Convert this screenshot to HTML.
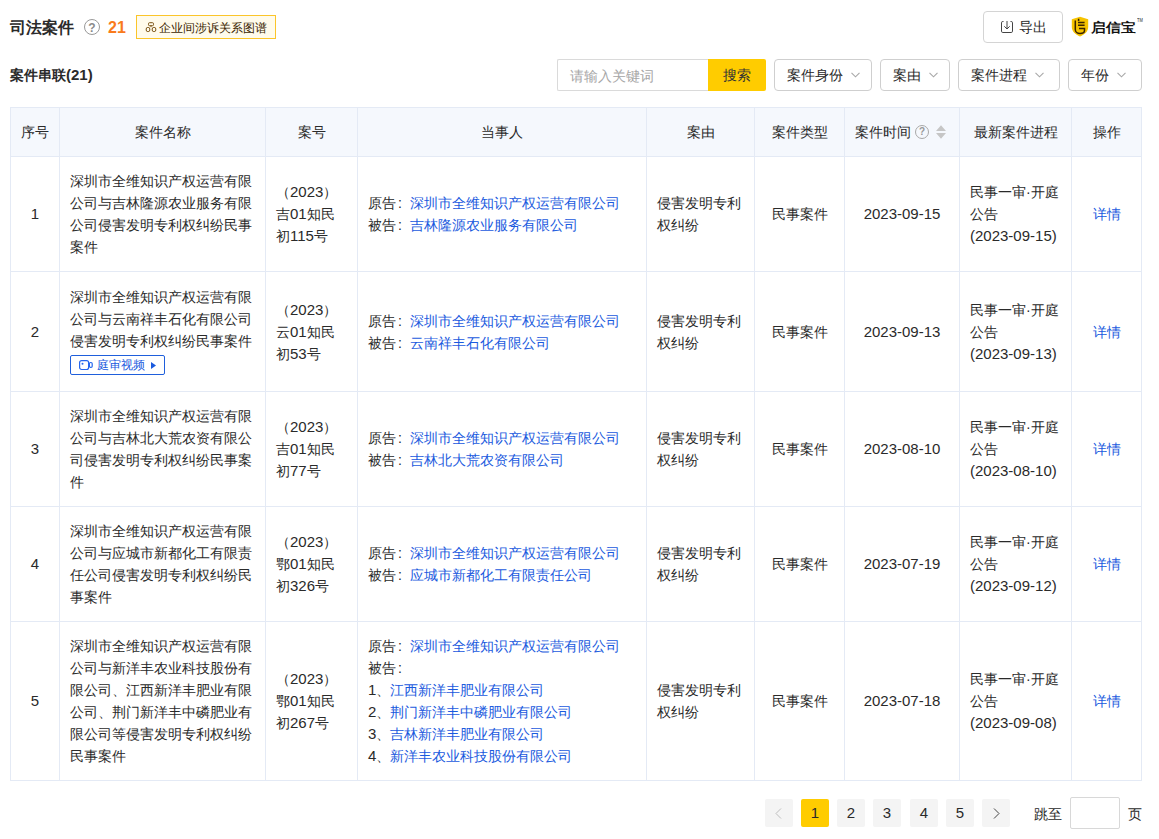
<!DOCTYPE html><html><head><meta charset="utf-8"><style>
*{margin:0;padding:0;box-sizing:border-box}
html,body{width:1159px;height:839px;overflow:hidden;background:#fff}
body{position:relative;font-family:"Liberation Sans",sans-serif;font-size:14px;color:#2a2a2a;line-height:22px}
.a{position:absolute}
.nw{white-space:nowrap}
.c{position:absolute;display:flex;align-items:center;padding:0 10px;white-space:nowrap}
.cc{justify-content:center;text-align:center}
.hl{position:absolute;height:1px;background:#e4eaf5}
.vl{position:absolute;width:1px;background:#e4eaf5}
.lk{color:#1a5ade}
.n{font-size:15px}
.co{display:inline-block;width:14px;padding-left:2px}
.dd{position:absolute;top:59px;height:32px;border:1px solid #cfcfcf;border-radius:4px;display:flex;align-items:center;padding-left:12px;white-space:nowrap}
.chev{position:absolute;top:12px;width:9px;height:6px}
.pg{position:absolute;top:799px;width:28px;height:28px;background:#f4f4f4;border-radius:2px;text-align:center;line-height:28px;font-size:14px}
</style></head><body><div class="a nw" style="left:10px;top:17px;font-size:16px;font-weight:bold;line-height:22px">司法案件</div>
<div class="a" style="left:84px;top:19px;width:16px;height:16px;border:1px solid #999;border-radius:50%;font-size:12px;font-weight:bold;line-height:16px;text-align:center;color:#8a8a8a">?</div>
<div class="a nw" style="left:108px;top:17px;font-size:16px;font-weight:bold;color:#f97a1c;line-height:22px">21</div>
<div class="a nw" style="left:136px;top:15px;width:140px;height:24px;border:1px solid #fbc52a;background:#fffbeb;font-size:12px;line-height:24px;padding-left:22px;color:#3a2500">企业间涉诉关系图谱</div>
<svg class="a" style="left:145px;top:21px" width="12" height="12" viewBox="0 0 12 12"><g fill="none" stroke="#7a5212" stroke-width="1"><rect x="3.5" y="1.7" width="5" height="3" rx="1"/><path d="M6 4.7V6.2"/><rect x="1.2" y="6.4" width="3.6" height="4.2" rx="1.6"/><rect x="7.2" y="6.4" width="3.6" height="4.2" rx="1.6"/></g></svg>
<div class="a" style="left:983px;top:11px;width:80px;height:32px;border:1px solid #d4d4d4;border-radius:4px"></div>
<svg class="a" style="left:1000px;top:20px" width="14" height="14" viewBox="0 0 14 14"><g fill="none" stroke="#444" stroke-width="1"><path d="M3.5 1.5H2.8Q1.5 1.5 1.5 2.8V11.2Q1.5 12.5 2.8 12.5H11.2Q12.5 12.5 12.5 11.2V2.8Q12.5 1.5 11.2 1.5H10.5"/><path d="M7 1V9M4.3 6.3L7 9L9.7 6.3"/></g></svg>
<div class="a nw" style="left:1019px;top:16px">导出</div>
<svg class="a" style="left:1071px;top:16px" width="18" height="21" viewBox="0 0 18 21"><path d="M9 0.8L17.2 3.2V11C17.2 15.3 13.6 18.8 9 20.4C4.4 18.8 0.8 15.3 0.8 11V3.2Z" fill="#f6c300"/><g stroke="#3b2400" stroke-width="1.5" fill="none"><path d="M4.3 4.5V13.5C4.3 16 6.5 17.5 9 17.5C11.5 17.5 13.5 16.3 13.5 14.5V12.5H8"/><path d="M7.6 2.8V5M7 6.5H13.6M7 9.3H13.6"/></g></svg>
<div class="a nw" style="left:1091px;top:16px;font-size:15px;font-weight:bold;color:#111;letter-spacing:0px;transform:scaleY(0.88);transform-origin:0 13px">启信宝</div>
<div class="a nw" style="left:1137px;top:18px;font-size:5px;line-height:5px;color:#222;transform:scaleX(0.8);transform-origin:0 0">TM</div>
<div class="a nw" style="left:10px;top:64px;font-weight:bold">案件串联<span class="n">(21)</span></div>
<div class="a" style="left:557px;top:59px;width:152px;height:32px;border:1px solid #dadada;border-right:none;border-radius:2px 0 0 2px"></div>
<div class="a nw" style="left:570px;top:65px;color:#a6a6a6">请输入关键词</div>
<div class="a" style="left:708px;top:59px;width:58px;height:32px;background:#ffcc00;border-radius:0 2px 2px 0;text-align:center;line-height:32px;color:#333">搜索</div>
<div class="dd" style="left:774px;width:98px">案件身份<svg class="chev" style="left:76px" width="9" height="6" viewBox="0 0 9 6"><path d="M0.5 0.8L4.5 4.8L8.5 0.8" fill="none" stroke="#a8a8a8" stroke-width="1.1"/></svg></div>
<div class="dd" style="left:880px;width:70px">案由<svg class="chev" style="left:48px" width="9" height="6" viewBox="0 0 9 6"><path d="M0.5 0.8L4.5 4.8L8.5 0.8" fill="none" stroke="#a8a8a8" stroke-width="1.1"/></svg></div>
<div class="dd" style="left:958px;width:102px">案件进程<svg class="chev" style="left:76px" width="9" height="6" viewBox="0 0 9 6"><path d="M0.5 0.8L4.5 4.8L8.5 0.8" fill="none" stroke="#a8a8a8" stroke-width="1.1"/></svg></div>
<div class="dd" style="left:1068px;width:74px">年份<svg class="chev" style="left:48px" width="9" height="6" viewBox="0 0 9 6"><path d="M0.5 0.8L4.5 4.8L8.5 0.8" fill="none" stroke="#a8a8a8" stroke-width="1.1"/></svg></div>
<div class="a" style="left:10px;top:107px;width:1132px;height:49px;background:#f5f8fd"></div>
<div class="hl" style="left:10px;top:107px;width:1132px"></div>
<div class="hl" style="left:10px;top:156px;width:1132px"></div>
<div class="hl" style="left:10px;top:271px;width:1132px"></div>
<div class="hl" style="left:10px;top:391px;width:1132px"></div>
<div class="hl" style="left:10px;top:506px;width:1132px"></div>
<div class="hl" style="left:10px;top:621px;width:1132px"></div>
<div class="hl" style="left:10px;top:780px;width:1132px"></div>
<div class="vl" style="left:10px;top:107px;height:674px"></div>
<div class="vl" style="left:59px;top:107px;height:674px"></div>
<div class="vl" style="left:265px;top:107px;height:674px"></div>
<div class="vl" style="left:357px;top:107px;height:674px"></div>
<div class="vl" style="left:646px;top:107px;height:674px"></div>
<div class="vl" style="left:754px;top:107px;height:674px"></div>
<div class="vl" style="left:844px;top:107px;height:674px"></div>
<div class="vl" style="left:959px;top:107px;height:674px"></div>
<div class="vl" style="left:1071px;top:107px;height:674px"></div>
<div class="vl" style="left:1141px;top:107px;height:674px"></div>
<div class="c cc" style="left:11px;top:108px;width:48px;height:48px;"><div>序号</div></div>
<div class="c cc" style="left:60px;top:108px;width:205px;height:48px;"><div>案件名称</div></div>
<div class="c cc" style="left:266px;top:108px;width:91px;height:48px;"><div>案号</div></div>
<div class="c cc" style="left:358px;top:108px;width:288px;height:48px;"><div>当事人</div></div>
<div class="c cc" style="left:647px;top:108px;width:107px;height:48px;"><div>案由</div></div>
<div class="c cc" style="left:755px;top:108px;width:89px;height:48px;"><div>案件类型</div></div>
<div class="a nw" style="left:855px;top:121px">案件时间</div>
<div class="a" style="left:915px;top:125px;width:14px;height:14px;border:1px solid #a8a8a8;border-radius:50%;font-size:10px;font-weight:bold;line-height:12px;text-align:center;color:#999">?</div>
<svg class="a" style="left:936px;top:125px" width="10" height="14" viewBox="0 0 10 14"><path d="M5 0.3L10 6H0Z M0 8H10L5 13.7Z" fill="#c6c6c6"/></svg>
<div class="c cc" style="left:960px;top:108px;width:111px;height:48px;"><div>最新案件进程</div></div>
<div class="c cc" style="left:1072px;top:108px;width:69px;height:48px;"><div>操作</div></div>
<div class="c cc" style="left:11px;top:157px;width:48px;height:114px;"><div><span class="n">1</span></div></div>
<div class="c" style="left:60px;top:157px;width:205px;height:114px;"><div>深圳市全维知识产权运营有限<br>公司与吉林隆源农业服务有限<br>公司侵害发明专利权纠纷民事<br>案件</div></div>
<div class="c" style="left:266px;top:157px;width:91px;height:114px;"><div>（<span class="n">2023</span>）<br>吉<span class="n">01</span>知民<br>初<span class="n">115</span>号</div></div>
<div class="c" style="left:358px;top:157px;width:288px;height:114px;"><div>原告<span class="co">:</span><span class="lk">深圳市全维知识产权运营有限公司</span><br>被告<span class="co">:</span><span class="lk">吉林隆源农业服务有限公司</span></div></div>
<div class="c" style="left:647px;top:157px;width:107px;height:114px;"><div>侵害发明专利<br>权纠纷</div></div>
<div class="c cc" style="left:755px;top:157px;width:89px;height:114px;"><div>民事案件</div></div>
<div class="c cc" style="left:845px;top:157px;width:114px;height:114px;"><div><span class="n">2023-09-15</span></div></div>
<div class="c" style="left:960px;top:157px;width:111px;height:114px;"><div>民事一审·开庭<br>公告<br><span class="n">(2023-09-15)</span></div></div>
<div class="c cc" style="left:1072px;top:157px;width:69px;height:114px;"><div><span class="lk">详情</span></div></div>
<div class="c cc" style="left:11px;top:272px;width:48px;height:119px;"><div><span class="n">2</span></div></div>
<div class="c" style="left:60px;top:272px;width:205px;height:119px;"><div>深圳市全维知识产权运营有限<br>公司与云南祥丰石化有限公司<br>侵害发明专利权纠纷民事案件<div style="height:26px;padding-top:3px"><div style="position:relative;width:95px;height:20px;border:1px solid #1f5fdc;border-radius:2px;color:#1a5ade;font-size:12px;line-height:19px;padding-left:26px"><svg style="position:absolute;left:7px;top:3px" width="16" height="12" viewBox="0 0 16 12"><g fill="none" stroke="#2566ee" stroke-width="1.2"><rect x="1.6" y="1.6" width="9" height="8.9" rx="2"/><rect x="11.4" y="3.5" width="2.8" height="4.9" rx="1.2"/></g><circle cx="4.5" cy="4.8" r="1" fill="#2566ee"/></svg>庭审视频<svg style="position:absolute;left:80px;top:6px" width="5" height="7" viewBox="0 0 5 7"><path d="M0 0L5 3.5L0 7Z" fill="#1a5ade"/></svg></div></div></div></div>
<div class="c" style="left:266px;top:272px;width:91px;height:119px;"><div>（<span class="n">2023</span>）<br>云<span class="n">01</span>知民<br>初<span class="n">53</span>号</div></div>
<div class="c" style="left:358px;top:272px;width:288px;height:119px;"><div>原告<span class="co">:</span><span class="lk">深圳市全维知识产权运营有限公司</span><br>被告<span class="co">:</span><span class="lk">云南祥丰石化有限公司</span></div></div>
<div class="c" style="left:647px;top:272px;width:107px;height:119px;"><div>侵害发明专利<br>权纠纷</div></div>
<div class="c cc" style="left:755px;top:272px;width:89px;height:119px;"><div>民事案件</div></div>
<div class="c cc" style="left:845px;top:272px;width:114px;height:119px;"><div><span class="n">2023-09-13</span></div></div>
<div class="c" style="left:960px;top:272px;width:111px;height:119px;"><div>民事一审·开庭<br>公告<br><span class="n">(2023-09-13)</span></div></div>
<div class="c cc" style="left:1072px;top:272px;width:69px;height:119px;"><div><span class="lk">详情</span></div></div>
<div class="c cc" style="left:11px;top:392px;width:48px;height:114px;"><div><span class="n">3</span></div></div>
<div class="c" style="left:60px;top:392px;width:205px;height:114px;"><div>深圳市全维知识产权运营有限<br>公司与吉林北大荒农资有限公<br>司侵害发明专利权纠纷民事案<br>件</div></div>
<div class="c" style="left:266px;top:392px;width:91px;height:114px;"><div>（<span class="n">2023</span>）<br>吉<span class="n">01</span>知民<br>初<span class="n">77</span>号</div></div>
<div class="c" style="left:358px;top:392px;width:288px;height:114px;"><div>原告<span class="co">:</span><span class="lk">深圳市全维知识产权运营有限公司</span><br>被告<span class="co">:</span><span class="lk">吉林北大荒农资有限公司</span></div></div>
<div class="c" style="left:647px;top:392px;width:107px;height:114px;"><div>侵害发明专利<br>权纠纷</div></div>
<div class="c cc" style="left:755px;top:392px;width:89px;height:114px;"><div>民事案件</div></div>
<div class="c cc" style="left:845px;top:392px;width:114px;height:114px;"><div><span class="n">2023-08-10</span></div></div>
<div class="c" style="left:960px;top:392px;width:111px;height:114px;"><div>民事一审·开庭<br>公告<br><span class="n">(2023-08-10)</span></div></div>
<div class="c cc" style="left:1072px;top:392px;width:69px;height:114px;"><div><span class="lk">详情</span></div></div>
<div class="c cc" style="left:11px;top:507px;width:48px;height:114px;"><div><span class="n">4</span></div></div>
<div class="c" style="left:60px;top:507px;width:205px;height:114px;"><div>深圳市全维知识产权运营有限<br>公司与应城市新都化工有限责<br>任公司侵害发明专利权纠纷民<br>事案件</div></div>
<div class="c" style="left:266px;top:507px;width:91px;height:114px;"><div>（<span class="n">2023</span>）<br>鄂<span class="n">01</span>知民<br>初<span class="n">326</span>号</div></div>
<div class="c" style="left:358px;top:507px;width:288px;height:114px;"><div>原告<span class="co">:</span><span class="lk">深圳市全维知识产权运营有限公司</span><br>被告<span class="co">:</span><span class="lk">应城市新都化工有限责任公司</span></div></div>
<div class="c" style="left:647px;top:507px;width:107px;height:114px;"><div>侵害发明专利<br>权纠纷</div></div>
<div class="c cc" style="left:755px;top:507px;width:89px;height:114px;"><div>民事案件</div></div>
<div class="c cc" style="left:845px;top:507px;width:114px;height:114px;"><div><span class="n">2023-07-19</span></div></div>
<div class="c" style="left:960px;top:507px;width:111px;height:114px;"><div>民事一审·开庭<br>公告<br><span class="n">(2023-09-12)</span></div></div>
<div class="c cc" style="left:1072px;top:507px;width:69px;height:114px;"><div><span class="lk">详情</span></div></div>
<div class="c cc" style="left:11px;top:622px;width:48px;height:158px;"><div><span class="n">5</span></div></div>
<div class="c" style="left:60px;top:622px;width:205px;height:158px;"><div>深圳市全维知识产权运营有限<br>公司与新洋丰农业科技股份有<br>限公司、江西新洋丰肥业有限<br>公司、荆门新洋丰中磷肥业有<br>限公司等侵害发明专利权纠纷<br>民事案件</div></div>
<div class="c" style="left:266px;top:622px;width:91px;height:158px;"><div>（<span class="n">2023</span>）<br>鄂<span class="n">01</span>知民<br>初<span class="n">267</span>号</div></div>
<div class="c" style="left:358px;top:622px;width:288px;height:158px;"><div>原告<span class="co">:</span><span class="lk">深圳市全维知识产权运营有限公司</span><br>被告<span class="co">:</span><br><span class="n">1</span>、<span class="lk">江西新洋丰肥业有限公司</span><br><span class="n">2</span>、<span class="lk">荆门新洋丰中磷肥业有限公司</span><br><span class="n">3</span>、<span class="lk">吉林新洋丰肥业有限公司</span><br><span class="n">4</span>、<span class="lk">新洋丰农业科技股份有限公司</span></div></div>
<div class="c" style="left:647px;top:622px;width:107px;height:158px;"><div>侵害发明专利<br>权纠纷</div></div>
<div class="c cc" style="left:755px;top:622px;width:89px;height:158px;"><div>民事案件</div></div>
<div class="c cc" style="left:845px;top:622px;width:114px;height:158px;"><div><span class="n">2023-07-18</span></div></div>
<div class="c" style="left:960px;top:622px;width:111px;height:158px;"><div>民事一审·开庭<br>公告<br><span class="n">(2023-09-08)</span></div></div>
<div class="c cc" style="left:1072px;top:622px;width:69px;height:158px;"><div><span class="lk">详情</span></div></div>
<div class="pg" style="left:765px"><svg style="position:absolute;left:10px;top:9px" width="7" height="11" viewBox="0 0 7 11"><path d="M6 0.5L1 5.5L6 10.5" fill="none" stroke="#bdbdbd" stroke-width="1"/></svg></div>
<div class="pg" style="left:801px;background:#ffcc00;"><span class="n">1</span></div>
<div class="pg" style="left:837px;"><span class="n">2</span></div>
<div class="pg" style="left:873px;"><span class="n">3</span></div>
<div class="pg" style="left:910px;"><span class="n">4</span></div>
<div class="pg" style="left:946px;"><span class="n">5</span></div>
<div class="pg" style="left:982px"><svg style="position:absolute;left:11px;top:9px" width="7" height="11" viewBox="0 0 7 11"><path d="M1 0.5L6 5.5L1 10.5" fill="none" stroke="#444" stroke-width="1"/></svg></div>
<div class="a nw" style="left:1034px;top:803px">跳至</div>
<div class="a" style="left:1070px;top:797px;width:50px;height:32px;border:1px solid #d8d8d8;border-radius:2px"></div>
<div class="a nw" style="left:1128px;top:803px">页</div></body></html>
